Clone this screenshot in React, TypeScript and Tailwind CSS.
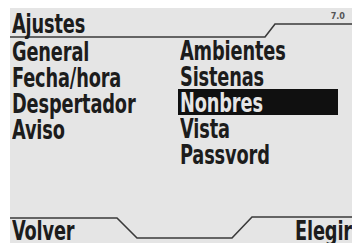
import React from "react";

const font = { fontFamily: '"DejaVu Sans Condensed", "DejaVu Sans", sans-serif' };

function T({ children, right = false }: { children: React.ReactNode; right?: boolean }) {
  return (
    <span
      className={
        right
          ? "inline-block origin-right scale-x-[0.76] text-[26px] leading-[26px] tracking-[-0.2px] whitespace-nowrap"
          : "inline-block origin-left scale-x-[0.76] text-[26px] leading-[26px] tracking-[-0.2px] whitespace-nowrap"
      }
    >
      {children}
    </span>
  );
}

export default function App() {
  const left = ["General", "Fecha/hora", "Despertador", "Aviso"];
  const right = ["Ambientes", "Sistenas", "Nonbres", "Vista", "Passvord"];
  return (
    <div className="w-[359px] h-[243px] bg-white overflow-hidden pt-[8px] pl-[10px]">
      <div
        className="relative w-[342px] h-[235px] bg-[#e5e5e5] text-[#1c1c1c] font-bold overflow-hidden"
        style={font}
      >
        <svg className="absolute left-0 top-0" width="342" height="235" viewBox="0 0 342 235">
          <polyline points="0,29 255,29 265,16 342,16" fill="none" stroke="#3a3a3a" strokeWidth="1.6" />
          <polyline points="0,210 107,210 127,230 222,230 242,209 345,209" fill="none" stroke="#3a3a3a" strokeWidth="1.6" />
        </svg>
        <div className="relative flex justify-between h-[29px] pt-[3px]">
          <div className="pl-[2px]"><T>Ajustes</T></div>
          <span className="pr-[7px] text-[9px] leading-[10px] text-[#555]">7.0</span>
        </div>
        <div className="relative flex h-[179px]">
          <div className="w-[168px] flex flex-col pl-[2px]">
            {left.map((t) => (
              <div key={t} className="h-[26px] pt-[2px]"><T>{t}</T></div>
            ))}
          </div>
          <div className="w-[160px] flex flex-col">
            {right.map((t) => (
              <div
                key={t}
                className={"h-[26px] pt-[1px] pl-[2px] " + (t === "Nonbres" ? "bg-[#101010] text-[#e5e5e5]" : "")}
              >
                <T>{t}</T>
              </div>
            ))}
          </div>
        </div>
        <div className="relative flex justify-between pl-[2px] pt-[2px]">
          <T>Volver</T>
          <T right>Elegir</T>
        </div>
      </div>
    </div>
  );
}
